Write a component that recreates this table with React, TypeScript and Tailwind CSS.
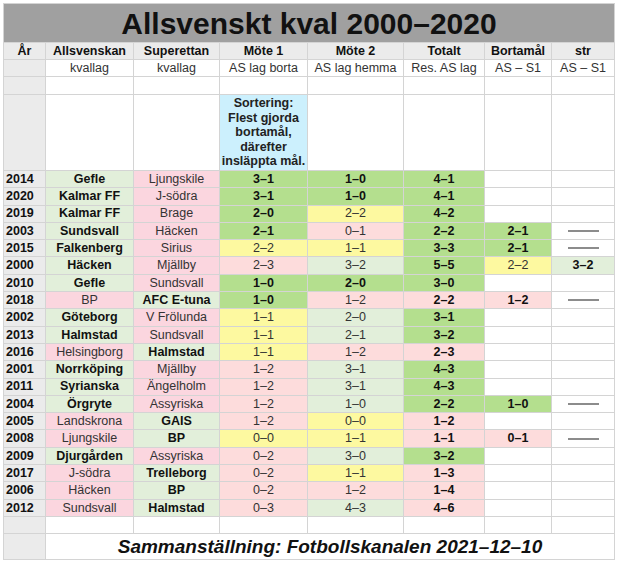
import React from "react";

type C = "DG" | "LG" | "P" | "LR" | "Y" | "W";

const BG: Record<C, string> = {
  DG: "bg-[#b4df8e]",
  LG: "bg-[#e2efda]",
  P: "bg-[#fbd6df]",
  LR: "bg-[#fddcdc]",
  Y: "bg-[#fdf9a0]",
  W: "bg-white",
};

type Row = {
  y: string;
  as: string;
  asW: boolean;
  s1: string;
  m1: string;
  m1c: C;
  m2: string;
  m2c: C;
  tot: string;
  totc: C;
  bm?: string;
  bmc?: C;
  str?: string;
  strc?: C;
};

const rows: Row[] = [
  { y: "2014", as: "Gefle", asW: true, s1: "Ljungskile", m1: "3–1", m1c: "DG", m2: "1–0", m2c: "DG", tot: "4–1", totc: "DG" },
  { y: "2020", as: "Kalmar FF", asW: true, s1: "J-södra", m1: "3–1", m1c: "DG", m2: "1–0", m2c: "DG", tot: "4–1", totc: "DG" },
  { y: "2019", as: "Kalmar FF", asW: true, s1: "Brage", m1: "2–0", m1c: "DG", m2: "2–2", m2c: "Y", tot: "4–2", totc: "DG" },
  { y: "2003", as: "Sundsvall", asW: true, s1: "Häcken", m1: "2–1", m1c: "DG", m2: "0–1", m2c: "LR", tot: "2–2", totc: "DG", bm: "2–1", bmc: "DG", str: "dash" },
  { y: "2015", as: "Falkenberg", asW: true, s1: "Sirius", m1: "2–2", m1c: "Y", m2: "1–1", m2c: "Y", tot: "3–3", totc: "DG", bm: "2–1", bmc: "DG", str: "dash" },
  { y: "2000", as: "Häcken", asW: true, s1: "Mjällby", m1: "2–3", m1c: "LR", m2: "3–2", m2c: "LG", tot: "5–5", totc: "DG", bm: "2–2", bmc: "Y", str: "3–2", strc: "LG" },
  { y: "2010", as: "Gefle", asW: true, s1: "Sundsvall", m1: "1–0", m1c: "DG", m2: "2–0", m2c: "DG", tot: "3–0", totc: "DG" },
  { y: "2018", as: "BP", asW: false, s1: "AFC E-tuna", m1: "1–0", m1c: "DG", m2: "1–2", m2c: "LR", tot: "2–2", totc: "LR", bm: "1–2", bmc: "LR", str: "dash" },
  { y: "2002", as: "Göteborg", asW: true, s1: "V Frölunda", m1: "1–1", m1c: "Y", m2: "2–0", m2c: "LG", tot: "3–1", totc: "DG" },
  { y: "2013", as: "Halmstad", asW: true, s1: "Sundsvall", m1: "1–1", m1c: "Y", m2: "2–1", m2c: "LG", tot: "3–2", totc: "DG" },
  { y: "2016", as: "Helsingborg", asW: false, s1: "Halmstad", m1: "1–1", m1c: "Y", m2: "1–2", m2c: "LR", tot: "2–3", totc: "LR" },
  { y: "2001", as: "Norrköping", asW: true, s1: "Mjällby", m1: "1–2", m1c: "LR", m2: "3–1", m2c: "LG", tot: "4–3", totc: "DG" },
  { y: "2011", as: "Syrianska", asW: true, s1: "Ängelholm", m1: "1–2", m1c: "LR", m2: "3–1", m2c: "LG", tot: "4–3", totc: "DG" },
  { y: "2004", as: "Örgryte", asW: true, s1: "Assyriska", m1: "1–2", m1c: "LR", m2: "1–0", m2c: "LG", tot: "2–2", totc: "DG", bm: "1–0", bmc: "DG", str: "dash" },
  { y: "2005", as: "Landskrona", asW: false, s1: "GAIS", m1: "1–2", m1c: "LR", m2: "0–0", m2c: "Y", tot: "1–2", totc: "LR" },
  { y: "2008", as: "Ljungskile", asW: false, s1: "BP", m1: "0–0", m1c: "Y", m2: "1–1", m2c: "Y", tot: "1–1", totc: "LR", bm: "0–1", bmc: "LR", str: "dash" },
  { y: "2009", as: "Djurgården", asW: true, s1: "Assyriska", m1: "0–2", m1c: "LR", m2: "3–0", m2c: "LG", tot: "3–2", totc: "DG" },
  { y: "2017", as: "J-södra", asW: false, s1: "Trelleborg", m1: "0–2", m1c: "LR", m2: "1–1", m2c: "Y", tot: "1–3", totc: "LR" },
  { y: "2006", as: "Häcken", asW: false, s1: "BP", m1: "0–2", m1c: "LR", m2: "1–2", m2c: "LR", tot: "1–4", totc: "LR" },
  { y: "2012", as: "Sundsvall", asW: false, s1: "Halmstad", m1: "0–3", m1c: "LR", m2: "4–3", m2c: "LG", tot: "4–6", totc: "LR" },
];

const font = { fontFamily: '"Liberation Sans", Arial, Helvetica, sans-serif' };

function Cell({
  bg,
  bold,
  h,
  children,
  left,
}: {
  bg: string;
  bold?: boolean;
  h: string;
  children?: React.ReactNode;
  left?: boolean;
}) {
  return (
    <div
      className={`${bg} ${h} flex items-center ${left ? "justify-start pl-[2px]" : "justify-center"} text-[12.5px] leading-none whitespace-nowrap ${
        bold ? "font-bold text-[#111]" : "font-normal text-[#333]"
      }`}
    >
      {children}
    </div>
  );
}

const Dash = () => <div className="w-[31px] h-[2px] bg-[#8c8c8c]" />;

export default function App() {
  const gh = "h-[16px]";
  const dh = "h-[16.3px]";
  return (
    <div className="bg-white w-[620px] h-[565px] pt-[3px] pl-[3px]" style={font}>
      <div className="inline-grid grid-cols-[41px_87px_85px_87px_95px_80px_66px_62px] gap-px bg-[#d4d4d4] p-px">
        {/* title */}
        <div className="col-span-8 h-[38px] bg-[#a0a0a0] flex items-center justify-center text-[30px] font-bold text-[#111] leading-none pt-[1px]">
          Allsvenskt kval 2000–2020
        </div>
        {/* header */}
        {["År", "Allsvenskan", "Superettan", "Möte 1", "Möte 2", "Totalt", "Bortamål", "str"].map((t) => (
          <Cell key={t} bg="bg-[#ebebeb]" bold h={gh}>
            {t}
          </Cell>
        ))}
        {/* sub header */}
        <Cell bg="bg-[#ebebeb]" h={gh} />
        {["kvallag", "kvallag", "AS lag borta", "AS lag hemma", "Res. AS lag", "AS – S1", "AS – S1"].map((t, i) => (
          <Cell key={i} bg="bg-white" h={gh}>
            {t}
          </Cell>
        ))}
        {/* empty */}
        <Cell bg="bg-[#ebebeb]" h="h-[17px]" />
        {Array.from({ length: 7 }).map((_, i) => (
          <Cell key={i} bg="bg-white" h="h-[17px]" />
        ))}
        {/* sort row */}
        <div className="bg-[#ebebeb] h-[75px]" />
        <div className="bg-white h-[75px]" />
        <div className="bg-white h-[75px]" />
        <div className="bg-[#ccf0fd] h-[75px] flex items-center justify-center text-center text-[12.5px] leading-[14.6px] font-bold text-[#222]">
          <div>
            Sortering:
            <br />
            Flest gjorda
            <br />
            bortamål,
            <br />
            därefter
            <br />
            insläppta mål.
          </div>
        </div>
        <div className="bg-white h-[75px]" />
        <div className="bg-white h-[75px]" />
        <div className="bg-white h-[75px]" />
        <div className="bg-white h-[75px]" />
        {/* data */}
        {rows.map((r) => (
          <React.Fragment key={r.y}>
            <Cell bg="bg-[#ebebeb]" bold left h={dh}>
              {r.y}
            </Cell>
            <Cell bg={r.asW ? BG.LG : BG.P} bold={r.asW} h={dh}>
              {r.as}
            </Cell>
            <Cell bg={r.asW ? BG.P : BG.LG} bold={!r.asW} h={dh}>
              {r.s1}
            </Cell>
            <Cell bg={BG[r.m1c]} bold={r.m1c === "DG"} h={dh}>
              {r.m1}
            </Cell>
            <Cell bg={BG[r.m2c]} bold={r.m2c === "DG"} h={dh}>
              {r.m2}
            </Cell>
            <Cell bg={BG[r.totc]} bold h={dh}>
              {r.tot}
            </Cell>
            <Cell bg={r.bmc ? BG[r.bmc] : BG.W} bold={r.bmc !== "Y"} h={dh}>
              {r.bm}
            </Cell>
            <Cell bg={r.strc ? BG[r.strc] : BG.W} bold h={dh}>
              {r.str === "dash" ? <Dash /> : r.str}
            </Cell>
          </React.Fragment>
        ))}
        {/* empty */}
        <Cell bg="bg-[#ebebeb]" h={gh} />
        {Array.from({ length: 7 }).map((_, i) => (
          <Cell key={i} bg="bg-white" h={gh} />
        ))}
        {/* footer */}
        <div className="bg-[#ebebeb] h-[25px]" />
        <div className="col-span-7 bg-white h-[25px] flex items-center justify-center text-[19px] font-bold italic text-[#111] leading-none">
          Sammanställning: Fotbollskanalen 2021–12–10
        </div>
      </div>
    </div>
  );
}
